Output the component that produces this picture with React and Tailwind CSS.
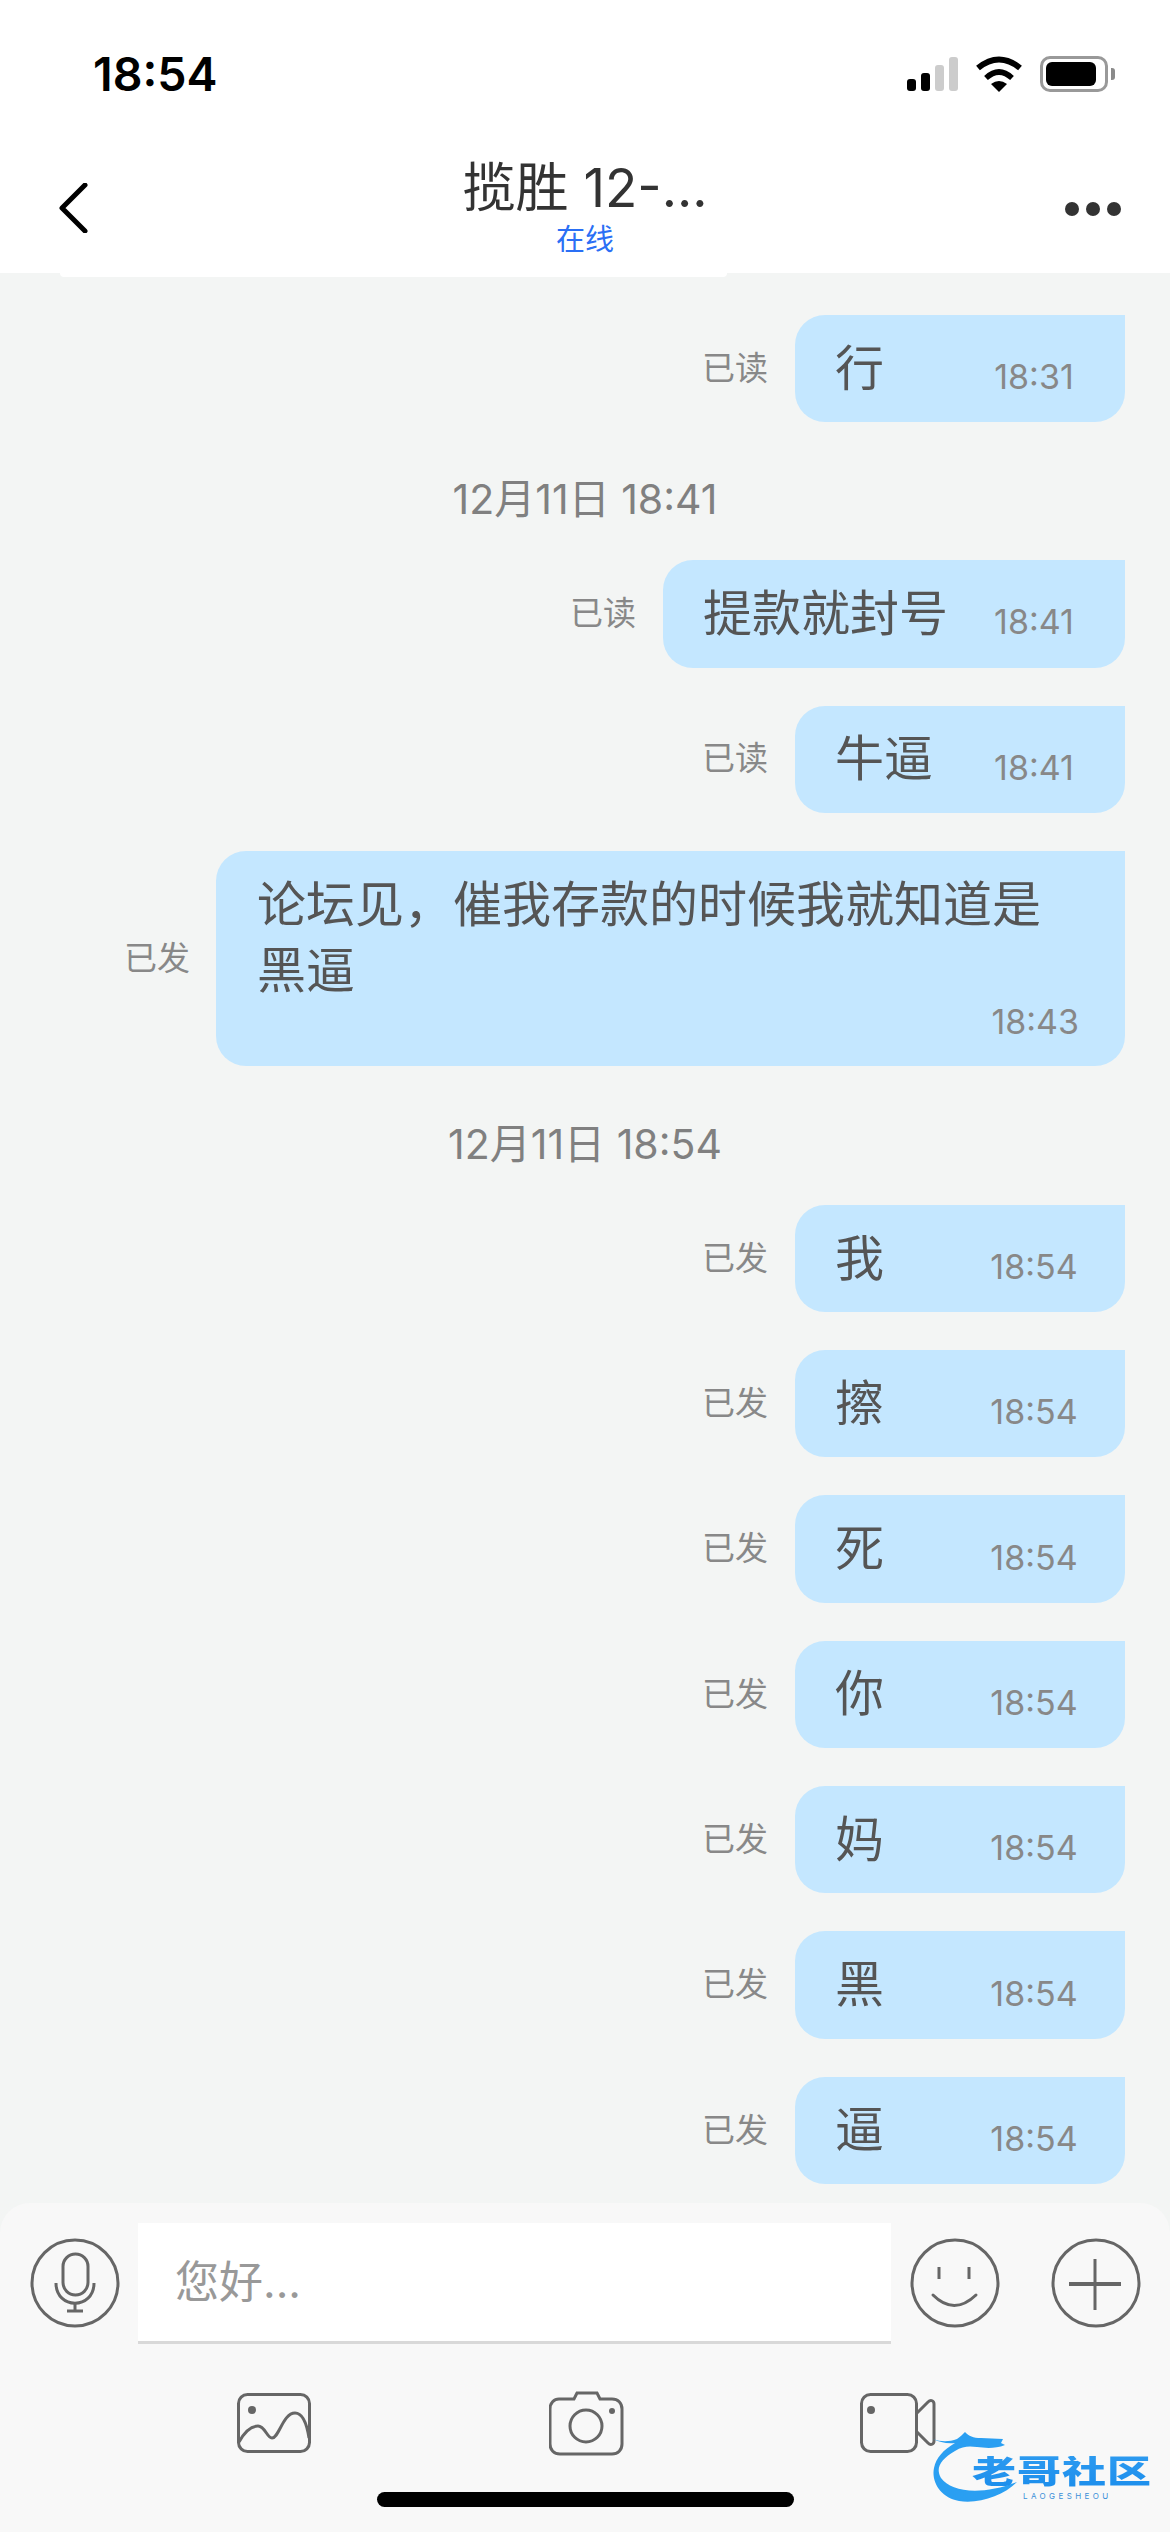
import React from 'react';

const cjk = "font-['Inter','Noto_Sans_CJK_SC',sans-serif]";

const StatusBar = () => (
  <div className="flex h-[148px] items-start justify-between pl-[93px] pr-[55px] pt-[55px]">
    <span className="text-[46.5px] font-semibold leading-[38px] text-black">18:54</span>
    <div className="flex items-start">
      <div className="mt-[2px] flex h-[34px] items-end gap-[5px]">
        <span className="h-[12px] w-[9px] rounded-[3px] bg-black" />
        <span className="h-[18px] w-[9px] rounded-[3px] bg-black" />
        <span className="h-[26px] w-[9px] rounded-[3px] bg-[#cccccc]" />
        <span className="h-[34px] w-[9px] rounded-[3px] bg-[#cccccc]" />
      </div>
      <svg className="ml-[17px]" width="48" height="38" viewBox="0 0 48 38">
        <path d="M3 13 Q24 -4 45 13" fill="none" stroke="#000" strokeWidth="6" />
        <path d="M11 23 Q24 11 37 23" fill="none" stroke="#000" strokeWidth="5.5" />
        <path d="M16 29 Q24 23 32 29 L24 37 Z" fill="#000" />
      </svg>
      <div className="ml-[17px] mt-[1px] flex h-[36px] w-[68px] items-center rounded-[10px] border-[3px] border-[#999999] pl-[3px]">
        <span className="h-[24px] w-[50px] rounded-[6px] bg-black" />
      </div>
      <span className="ml-[3px] mt-[13px] h-[12px] w-[4px] rounded-r-[3px] bg-[#8a8a8a]" />
    </div>
  </div>
);

const Header = () => (
  <div className="relative grid h-[125px] grid-cols-[1fr_auto_1fr] bg-white">
    <div className="pl-[58px] pt-[35px]">
      <svg width="30" height="50" viewBox="0 0 30 50">
        <path d="M27 2 L4 25 L27 48" fill="none" stroke="#000" strokeWidth="5" strokeLinecap="round" strokeLinejoin="round" />
      </svg>
    </div>
    <div className="flex flex-col items-center">
      <span className="mt-[7px] text-[53px] leading-[66px] text-[#333333]">揽胜 12-...</span>
      <span className="mt-[1px] text-[29px] leading-[36px] text-[#2a6ff5]">在线</span>
    </div>
    <div className="flex justify-end gap-[7px] pr-[49px] pt-[54px]">
      <span className="h-[14px] w-[14px] rounded-full bg-[#333333]" />
      <span className="h-[14px] w-[14px] rounded-full bg-[#333333]" />
      <span className="h-[14px] w-[14px] rounded-full bg-[#333333]" />
    </div>
    <div className="absolute left-[60px] top-full h-[4px] w-[667px] rounded-b-[8px] bg-white" />
  </div>
);

const Message = ({ text, time, status }) => (
  <div className="mb-[38px] flex items-center justify-end gap-[27px]">
    <span className="text-[33px] text-[#888888]">{status}</span>
    <div className="flex h-[107.3px] min-w-[330px] items-center justify-between gap-[41px] rounded-[30px] rounded-tr-none bg-[#c4e7ff] pl-[40px] pr-[46px]">
      <span className="text-[49px] leading-[66px] text-[#555555]">{text}</span>
      <span className="mt-[17px] w-[90px] text-center text-[34px] leading-[40px] text-[#888888]">{time}</span>
    </div>
  </div>
);

const DateLine = ({ children, className }) => (
  <div className={`text-center text-[41px] leading-[46px] text-[#808080] ${className}`}>{children}</div>
);

const Messages = () => (
  <div className="flex-1 overflow-hidden pl-[45px] pr-[45px] pt-[42px]">
    <Message text="行" time="18:31" status="已读" />
    <DateLine className="mb-[38px] mt-[54px]">12月11日 18:41</DateLine>
    <Message text="提款就封号" time="18:41" status="已读" />
    <Message text="牛逼" time="18:41" status="已读" />
    <div className="mb-[38px] flex items-center justify-end gap-[26px]">
      <span className="text-[33px] text-[#888888]">已发</span>
      <div className="flex w-[909px] flex-col rounded-[30px] rounded-tr-none bg-[#c4e7ff] pb-[26px] pl-[41px] pr-[46px] pt-[21px]">
        <p className="w-[790px] text-[49px] leading-[66px] text-[#555555]">论坛见，催我存款的时候我就知道是黑逼</p>
        <span className="self-end text-[34px] leading-[36px] text-[#888888]">18:43</span>
      </div>
    </div>
    <DateLine className="mb-[38px] mt-[55px]">12月11日 18:54</DateLine>
    <Message text="我" time="18:54" status="已发" />
    <Message text="擦" time="18:54" status="已发" />
    <Message text="死" time="18:54" status="已发" />
    <Message text="你" time="18:54" status="已发" />
    <Message text="妈" time="18:54" status="已发" />
    <Message text="黑" time="18:54" status="已发" />
    <Message text="逼" time="18:54" status="已发" />
  </div>
);

const stroke = { fill: 'none', stroke: '#666666', strokeWidth: 3 };

const RoundIcon = ({ children }) => (
  <svg className="shrink-0" width="90" height="90" viewBox="0 0 90 90">
    <circle cx="45" cy="45" r="43" {...stroke} />
    {children}
  </svg>
);

const Logo = () => (
  <div className="absolute left-[933px] top-[2430px] h-[76px] w-[222px]">
    <svg className="absolute left-0 top-0 blur-[0.6px]" width="100" height="76" viewBox="0 0 100 76">
      <path d="M0 9 C8 12 16 12 24 9 C28 6 30 4 32 2 C36 6 40 8 48 8 L70 9 L68 13 L72 15 C62 19 52 18 44 17 C36 16 30 16 22 21 C8 29 2 38 8 48 C18 62 48 66 84 52 C70 66 46 74 26 71 C8 68 -2 52 1 38 C3 28 10 20 22 13 C14 14 6 12 0 9 Z" fill="#2a9ff2" />
    </svg>
    <span className="absolute left-[39px] top-[26px] origin-top scale-y-[0.72] whitespace-nowrap bg-gradient-to-b from-[#2c9af0] to-[#1c8eec] bg-clip-text text-[44px] font-black leading-[44px] tracking-[1px] text-transparent blur-[0.6px]">
      老哥社区
    </span>
    <span className="absolute left-[90px] top-[61px] whitespace-nowrap text-[8px] leading-[10px] tracking-[3.4px] text-[#3a8fd8]">
      LAOGESHEOU
    </span>
  </div>
);

const Footer = () => (
  <div className="h-[329px] shrink-0 rounded-t-[30px] bg-[#f8f8f8]">
    <div className="flex items-start pl-[30px] pt-[20px]">
      <div className="mt-[15px]">
        <RoundIcon>
          <rect x="33" y="16" width="25" height="41" rx="12.5" {...stroke} />
          <path d="M26 45 C26 72 64 72 64 45" {...stroke} />
          <path d="M45 66 V73 M37 73 H53" {...stroke} />
        </RoundIcon>
      </div>
      <div className="ml-[18px] flex h-[121px] w-[753px] items-center border-b-[3px] border-[#d9d9d9] bg-white pl-[37px]">
        <span className="text-[44px] text-[#999999]">您好...</span>
      </div>
      <div className="ml-[19px] mt-[15px]">
        <RoundIcon>
          <path d="M29 29 V41 M59 29 V41" {...stroke} />
          <path d="M23 57 Q44 78 66 57" {...stroke} strokeLinecap="round" />
        </RoundIcon>
      </div>
      <div className="ml-[51px] mt-[15px]">
        <RoundIcon>
          <path d="M18 46 H70" {...stroke} strokeWidth="4" />
          <path d="M44 21 V72" {...stroke} />
        </RoundIcon>
      </div>
    </div>
    <div className="mt-[47px] flex items-start pl-[237px]">
      <svg className="mt-[2px]" width="74" height="60" viewBox="0 0 74 60">
        <rect x="1.5" y="1.5" width="71" height="57" rx="9" {...stroke} />
        <circle cx="15" cy="17" r="4" fill="#666666" />
        <path d="M2 49 C8 38 14 33 21 33 C28 33 30 45 35 45 C42 45 46 20 58 20 C66 20 70 32 72 45" {...stroke} />
      </svg>
      <svg className="ml-[238px]" width="75" height="65" viewBox="0 0 75 65">
        <path d="M10 8 H25 L28 2 H48 L51 8 H63 C69 8 73 12 73 18 V53 C73 59 69 63 63 63 H11 C5 63 1 59 1 53 V18 C1 12 5 8 10 8 Z" {...stroke} />
        <circle cx="37" cy="35" r="16" {...stroke} />
        <circle cx="63" cy="20" r="3" fill="#666666" />
      </svg>
      <svg className="ml-[236px] mt-[2px]" width="76" height="60" viewBox="0 0 76 60">
        <rect x="1.5" y="1.5" width="55" height="57" rx="9" {...stroke} />
        <circle cx="11" cy="17" r="4" fill="#666666" />
        <path d="M57 20 L68 9 C71 6 74 8 74 11 V48 C74 51 71 53 68 50 L57 39" {...stroke} />
      </svg>
    </div>
    <div className="ml-[377px] mt-[36px] h-[15px] w-[417px] rounded-[8px] bg-black" />
  </div>
);

export default function App() {
  return (
    <div className={`relative flex h-[2532px] w-[1170px] flex-col overflow-hidden bg-[#f3f5f4] ${cjk}`}>
      <div className="bg-white">
        <StatusBar />
      </div>
      <Header />
      <Messages />
      <Footer />
      <Logo />
    </div>
  );
}
